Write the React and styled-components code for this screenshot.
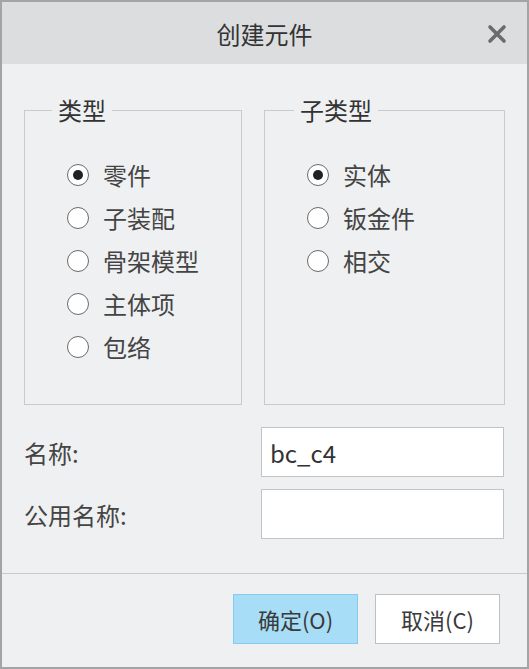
import React from 'react'
import styled, { createGlobalStyle } from 'styled-components'

const Global = createGlobalStyle`
  html, body {
    margin: 0;
    padding: 0;
    background: #eff0f2;
  }
  * { box-sizing: border-box; }
`

const font = `"Noto Sans CJK SC", "Noto Sans", sans-serif`

const Window = styled.div`
  width: 529px;
  height: 669px;
  border: 2px solid #a4a4a4;
  background: #eff0f2;
  display: flex;
  flex-direction: column;
  font-family: ${font};
  color: #3a3a3a;
`

const TitleBar = styled.div`
  height: 62px;
  background: #dcdddf;
  display: flex;
  align-items: center;
  justify-content: center;
  position: relative;
  font-size: 24px;
  color: #333;
`

const Close = styled.button`
  position: absolute;
  right: 20px;
  top: 22px;
  width: 20px;
  height: 20px;
  padding: 0;
  border: 0;
  background: none;
  display: flex;
`

const Body = styled.div`
  padding: 33px 23px 0 22px;
  display: flex;
  flex-direction: column;
`

const Groups = styled.div`
  display: grid;
  grid-template-columns: 218px 241px;
  gap: 22px;
`

const Group = styled.fieldset`
  margin: 0;
  height: 308px;
  border: 1px solid #c9cacc;
  padding: 0;
`

const Options = styled.div`
  padding: 40px 0 0 ${p => p.$inset}px;
  display: flex;
  flex-direction: column;
  gap: 19px;
`

const Legend = styled.legend`
  margin-left: ${p => p.$offset}px;
  padding: 0 6px;
  font-size: 24px;
  line-height: 26px;
  color: #333;
`

const Option = styled.label`
  display: flex;
  align-items: center;
  gap: 14px;
  font-size: 24px;
  line-height: 24px;
  color: #444;
`

const Dot = styled.span`
  width: 22px;
  height: 22px;
  border-radius: 50%;
  border: 1.8px solid #6a6a6a;
  background: #fff;
  display: flex;
  align-items: center;
  justify-content: center;
  &::after {
    content: '';
    width: 10px;
    height: 10px;
    border-radius: 50%;
    background: #222;
    display: ${p => (p.$on ? 'block' : 'none')};
  }
`

const Form = styled.div`
  margin-top: 22px;
  display: grid;
  grid-template-columns: 1fr 243px;
  row-gap: 12px;
  align-items: center;
`

const Label = styled.div`
  font-size: 24px;
  color: #444;
`

const Field = styled.div`
  height: 50px;
  background: #fff;
  border: 1.5px solid #c2c3c5;
  padding: 0 8px;
  display: flex;
  align-items: center;
  font-size: 24px;
  color: #333;
`

const Footer = styled.div`
  margin-top: 34px;
  border-top: 1.5px solid #c9cacc;
  padding: 20px 27px 0 0;
  display: flex;
  justify-content: flex-end;
  gap: 17px;
`

const Button = styled.button`
  width: 125px;
  height: 50px;
  font-family: ${font};
  font-size: 22px;
  color: #3a3a3a;
  background: ${p => (p.$primary ? '#a7ddf6' : '#fff')};
  border: 1.5px solid ${p => (p.$primary ? '#86cbee' : '#bfc0c2')};
  padding: 0;
`

const types = ['零件', '子装配', '骨架模型', '主体项', '包络']
const subtypes = ['实体', '钣金件', '相交']

const App = () => (
  <>
    <Global />
    <Window>
      <TitleBar>
        创建元件
        <Close>
          <svg width="20" height="20" viewBox="0 0 20 20">
            <path d="M3 3 L17 17 M17 3 L3 17" stroke="#6b6b6b" strokeWidth="3.6" strokeLinecap="round" />
          </svg>
        </Close>
      </TitleBar>
      <Body>
        <Groups>
          <Group>
            <Legend $offset={27}>类型</Legend>
            <Options $inset={42}>
              {types.map((t, i) => (
                <Option key={t}>
                  <Dot $on={i === 0} />
                  {t}
                </Option>
              ))}
            </Options>
          </Group>
          <Group>
            <Legend $offset={29}>子类型</Legend>
            <Options $inset={42}>
              {subtypes.map((t, i) => (
                <Option key={t}>
                  <Dot $on={i === 0} />
                  {t}
                </Option>
              ))}
            </Options>
          </Group>
        </Groups>
        <Form>
          <Label>名称:</Label>
          <Field>bc_c4</Field>
          <Label>公用名称:</Label>
          <Field />
        </Form>
      </Body>
      <Footer>
        <Button $primary>确定(O)</Button>
        <Button>取消(C)</Button>
      </Footer>
    </Window>
  </>
)

export default App
